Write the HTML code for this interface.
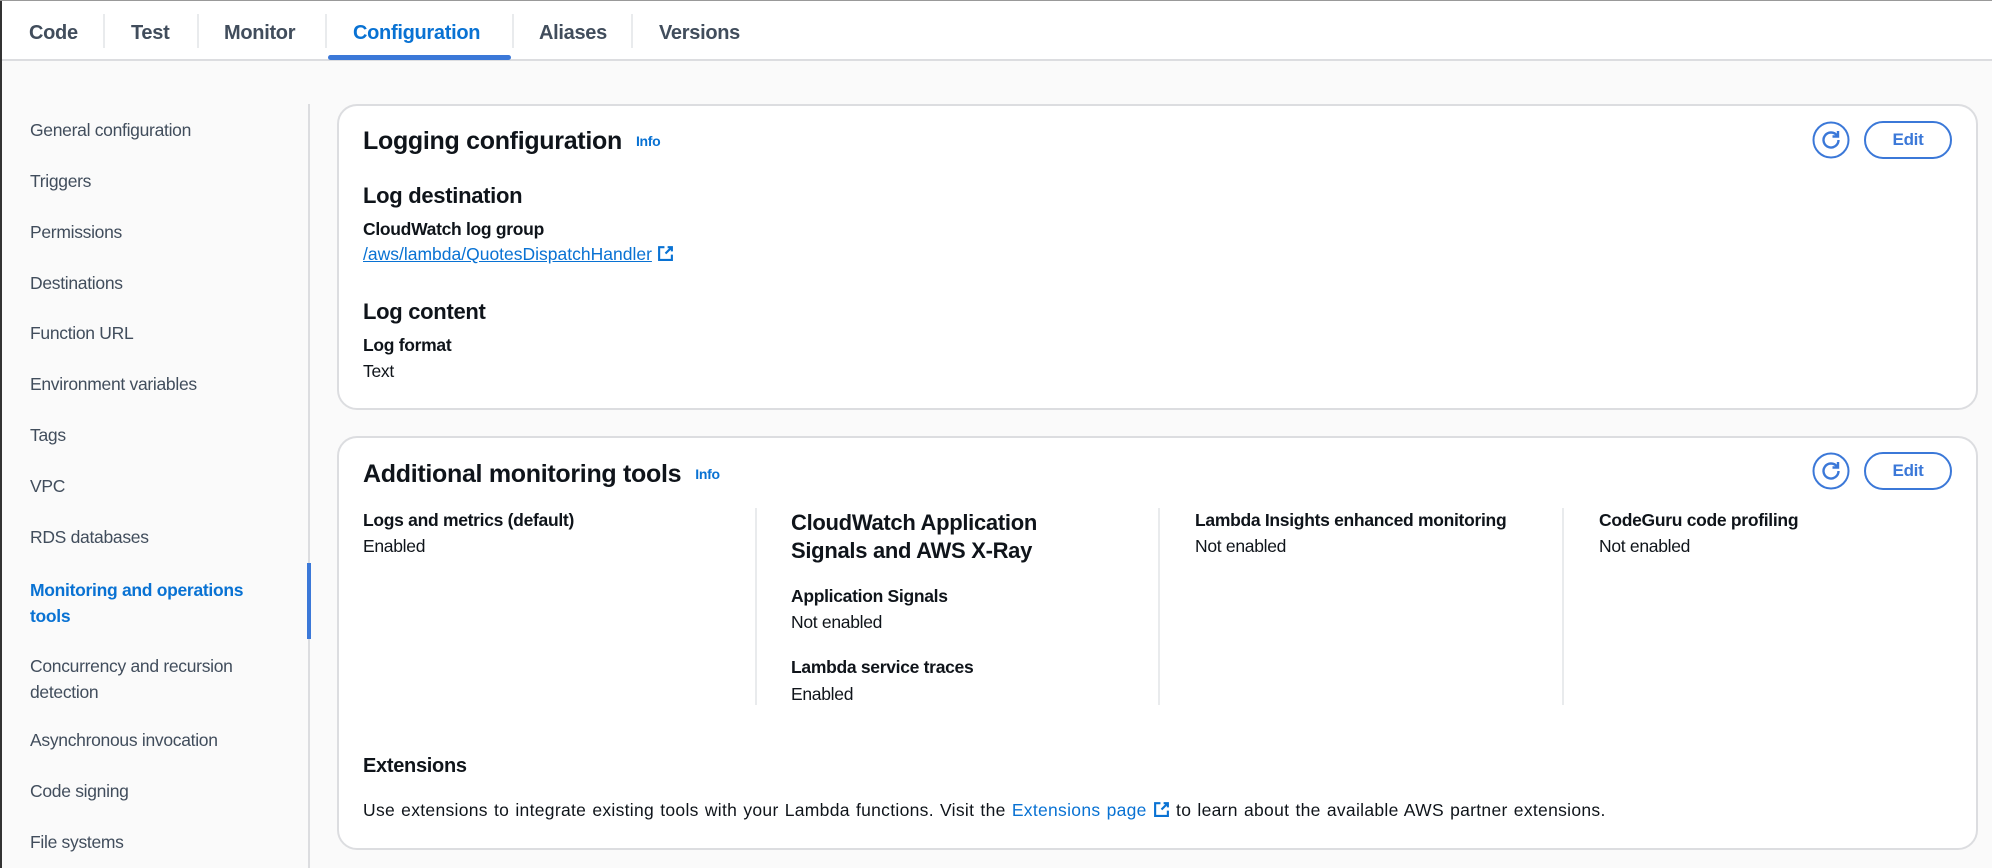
<!DOCTYPE html>
<html><head><meta charset="utf-8"><style>
*{margin:0;padding:0;box-sizing:border-box}
body{width:1992px;height:868px;overflow:hidden;background:#fafafa;font-family:"Liberation Sans",sans-serif;color:#0f141a;position:relative;letter-spacing:-0.3px}
.a{position:absolute;white-space:nowrap}
.tab{position:absolute;top:22px;font-size:20px;font-weight:bold;color:#414d5c}
.sep{position:absolute;top:14px;width:2px;height:34px;background:#e9ebed}
.side{position:absolute;left:30px;font-size:17.5px;color:#414d5c}
.card{position:absolute;left:337px;width:1641px;background:#fff;border:2px solid #dcdde0;border-radius:20px}
.h2{font-size:25px;font-weight:bold}
.info{font-size:14px;font-weight:bold;color:#0972d3;margin-left:14px;vertical-align:3px}
.h3{font-size:22px;font-weight:bold}
.lbl{font-size:17.5px;font-weight:bold}
.val{font-size:17.5px}
.link{color:#0972d3}
.btn{position:absolute;height:38px;border:2px solid #3b78d8;border-radius:20px;color:#3b78d8;font-weight:bold;font-size:17px;text-align:center;line-height:34px}
.vs{position:absolute;width:2px;background:#e9ebed}
</style></head><body>
<div class="a" style="left:0;top:0;width:1992px;height:61px;background:#fff;border-bottom:2px solid #dcdde0"></div>
<div class="a" style="left:0;top:0;width:2px;height:868px;background:#333"></div>
<div class="a" style="left:0;top:0;width:1992px;height:1px;background:#999"></div>
<div class="tab" style="left:29px">Code</div>
<div class="sep" style="left:103px"></div>
<div class="tab" style="left:131px">Test</div>
<div class="sep" style="left:197px"></div>
<div class="tab" style="left:224px">Monitor</div>
<div class="sep" style="left:325px"></div>
<div class="tab" style="left:353px;color:#0972d3">Configuration</div>
<div class="a" style="left:328px;top:55px;width:183px;height:5px;background:#3b78d8;border-radius:3px"></div>
<div class="sep" style="left:512px"></div>
<div class="tab" style="left:539px">Aliases</div>
<div class="sep" style="left:631px"></div>
<div class="tab" style="left:659px">Versions</div>

<div class="a" style="left:308px;top:104px;width:2px;height:764px;background:#dcdde0"></div>
<div class="a" style="left:307px;top:563px;width:4px;height:76px;background:#3b78d8"></div>
<div class="side" style="top:120px">General configuration</div>
<div class="side" style="top:171px">Triggers</div>
<div class="side" style="top:222px">Permissions</div>
<div class="side" style="top:273px">Destinations</div>
<div class="side" style="top:323px">Function URL</div>
<div class="side" style="top:374px">Environment variables</div>
<div class="side" style="top:425px">Tags</div>
<div class="side" style="top:476px">VPC</div>
<div class="side" style="top:527px">RDS databases</div>
<div class="side" style="top:577px;color:#0972d3;font-weight:bold;line-height:26px">Monitoring and operations<br>tools</div>
<div class="side" style="top:653px;line-height:26px">Concurrency and recursion<br>detection</div>
<div class="side" style="top:730px">Asynchronous invocation</div>
<div class="side" style="top:781px">Code signing</div>
<div class="side" style="top:832px">File systems</div>

<div class="card" style="top:104px;height:306px"></div>
<div class="a h2" style="left:363px;top:127px">Logging configuration<span class="info">Info</span></div>
<svg class="a" style="left:1812px;top:121px" width="38" height="38" viewBox="0 0 38 38"><circle cx="19" cy="19" r="17.5" fill="none" stroke="#3b78d8" stroke-width="2"/><path d="M25 14.5A7.5 7.5 0 1 0 26.5 19" fill="none" stroke="#3b78d8" stroke-width="2.4"/><path d="M26 10v5.5h-5.5" fill="none" stroke="#3b78d8" stroke-width="2.4"/></svg>
<div class="btn" style="left:1864px;top:121px;width:88px">Edit</div>
<div class="a h3" style="left:363px;top:183px">Log destination</div>
<div class="a lbl" style="left:363px;top:219px">CloudWatch log group</div>
<div class="a val link" style="left:363px;top:244px;letter-spacing:0"><span style="text-decoration:underline">/aws/lambda/QuotesDispatchHandler</span> <svg width="17" height="17" viewBox="0 0 16 16" style="vertical-align:-2px"><path d="M7 2H2v12h12V9M10 2h4v4M14 2L8 8" fill="none" stroke="#0972d3" stroke-width="2"/></svg></div>
<div class="a h3" style="left:363px;top:299px">Log content</div>
<div class="a lbl" style="left:363px;top:335px">Log format</div>
<div class="a val" style="left:363px;top:361px">Text</div>

<div class="card" style="top:436px;height:414px"></div>
<div class="a h2" style="left:363px;top:460px">Additional monitoring tools<span class="info">Info</span></div>
<svg class="a" style="left:1812px;top:452px" width="38" height="38" viewBox="0 0 38 38"><circle cx="19" cy="19" r="17.5" fill="none" stroke="#3b78d8" stroke-width="2"/><path d="M25 14.5A7.5 7.5 0 1 0 26.5 19" fill="none" stroke="#3b78d8" stroke-width="2.4"/><path d="M26 10v5.5h-5.5" fill="none" stroke="#3b78d8" stroke-width="2.4"/></svg>
<div class="btn" style="left:1864px;top:452px;width:88px">Edit</div>
<div class="vs" style="left:755px;top:508px;height:197px"></div>
<div class="vs" style="left:1158px;top:508px;height:197px"></div>
<div class="vs" style="left:1562px;top:508px;height:197px"></div>
<div class="a lbl" style="left:363px;top:510px">Logs and metrics (default)</div>
<div class="a val" style="left:363px;top:536px">Enabled</div>
<div class="a h3" style="left:791px;top:509px;line-height:28px">CloudWatch Application<br>Signals and AWS X-Ray</div>
<div class="a lbl" style="left:791px;top:586px">Application Signals</div>
<div class="a val" style="left:791px;top:612px">Not enabled</div>
<div class="a lbl" style="left:791px;top:657px">Lambda service traces</div>
<div class="a val" style="left:791px;top:684px">Enabled</div>
<div class="a lbl" style="left:1195px;top:510px">Lambda Insights enhanced monitoring</div>
<div class="a val" style="left:1195px;top:536px">Not enabled</div>
<div class="a lbl" style="left:1599px;top:510px">CodeGuru code profiling</div>
<div class="a val" style="left:1599px;top:536px">Not enabled</div>
<div class="a" style="left:363px;top:755px;font-size:20px;font-weight:bold">Extensions</div>
<div class="a val" style="left:363px;top:800px;letter-spacing:0.3px;word-spacing:1px">Use extensions to integrate existing tools with your Lambda functions. Visit the <span class="link">Extensions page</span> <svg width="17" height="17" viewBox="0 0 16 16" style="vertical-align:-2px"><path d="M7 2H2v12h12V9M10 2h4v4M14 2L8 8" fill="none" stroke="#0972d3" stroke-width="2"/></svg> to learn about the available AWS partner extensions.</div>
</body></html>
